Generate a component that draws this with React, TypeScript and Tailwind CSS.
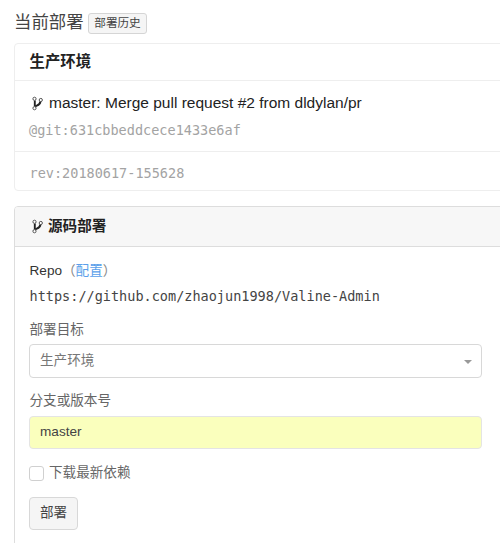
import React from "react";

function BranchIcon() {
  return (
    <svg width="12" height="15" viewBox="0 0 12 15" fill="none" className="shrink-0">
      <path d="M3.8 4.4V10.7" stroke="#222" strokeWidth="1.9" />
      <path d="M3.8 10.7C5.5 9.2 9.2 9.6 9.4 5.4" stroke="#222" strokeWidth="2" />
      <circle cx="3.5" cy="2.8" r="1.6" stroke="#555" strokeWidth="1" fill="#fff" />
      <circle cx="9.8" cy="4" r="1.6" stroke="#555" strokeWidth="1" fill="#fff" />
      <circle cx="3.5" cy="12.2" r="1.6" stroke="#555" strokeWidth="1" fill="#fff" />
    </svg>
  );
}

export default function App() {
  return (
    <div className="h-[543px] w-[500px] overflow-hidden bg-white pl-[14px] pt-3 font-['Liberation_Sans','Noto_Sans_CJK_SC',sans-serif] text-[13.6px] leading-5 text-[#333]">
      <header className="flex h-[31px] items-start">
        <h1 className="w-[74px] whitespace-nowrap text-[17.4px] leading-5 text-[#444]">当前部署</h1>
        <button className="mt-px flex h-[21px] w-[59px] items-center justify-center whitespace-nowrap rounded-[3px] border border-[#d5d5d5] bg-[#f5f5f5] pb-px text-[11.6px] leading-none text-[#444]">
          部署历史
        </button>
      </header>

      <section className="h-[148px] w-[500px] rounded-[4px] border border-[#eee]">
        <h2 className="flex h-[37px] items-center border-b border-[#eee] pb-px pl-[14.5px] text-[15.4px] font-bold text-[#222]">
          生产环境
        </h2>
        <div className="h-[71px] border-b border-[#eee] pl-[14px] pt-3">
          <div className="flex items-center gap-[6px] whitespace-nowrap text-[15.5px] text-[#222]">
            <span className="pl-0.5"><BranchIcon /></span>
            <span>master: Merge pull request #2 from dldylan/pr</span>
          </div>
          <div className="mt-[7px] font-['DejaVu_Sans_Mono',monospace] text-[13.54px] text-[#a3a3a3]">
            @git:631cbbeddcece1433e6af
          </div>
        </div>
        <div className="pl-[14.5px] pt-[11px] font-['DejaVu_Sans_Mono',monospace] text-[13.54px] text-[#a3a3a3]">
          rev:20180617-155628
        </div>
      </section>

      <section className="mt-[15px] h-[350px] w-[500px] rounded-t-[4px] border border-[#ddd]">
        <h2 className="flex h-[40px] items-center gap-[5px] rounded-t-[3px] border-b border-[#ddd] bg-[#f7f7f7] pb-px pl-4 text-[14.6px] font-bold text-[#222]">
          <BranchIcon />
          源码部署
        </h2>
        <div className="w-[467px] pl-[14px] pt-[14px]">
          <div className="flex h-5 items-center whitespace-nowrap pl-[0.5px]">
            <span>Repo</span>
            <span className="text-[#888]">（</span>
            <a className="text-[#5a9fea]">配置</a>
            <span className="text-[#888]">）</span>
          </div>
          <div className="mt-[5px] whitespace-nowrap pl-[0.5px] font-['DejaVu_Sans_Mono',monospace] text-[13.54px] text-[#444]">
            https://github.com/zhaojun1998/Valine-Admin
          </div>
          <label className="mt-[13px] block pl-[0.5px] pt-px text-[#666]">部署目标</label>
          <div className="mt-[4px] flex h-[34px] items-center justify-between rounded-[4px] border border-[#d8d8d8] pl-[10px] pr-[9px] text-[#777]">
            <span>生产环境</span>
            <svg width="8" height="4" viewBox="0 0 8 4" className="mt-0.5"><path d="M0 0H8L4 4Z" fill="#999" /></svg>
          </div>
          <label className="mt-[12px] block pl-[0.5px] pt-px text-[#666]">分支或版本号</label>
          <div className="mt-[5px] flex h-[33px] items-center rounded-[4px] border border-[#e4e4e4] bg-[#faffbd] pl-[10px] pb-0.5 text-[#444]">
            master
          </div>
          <label className="mt-[14px] flex h-5 items-center gap-[5px] text-[#666]">
            <span className="h-[15px] w-[15px] rounded-[3px] border border-[#d0d0d0] bg-white" />
            下载最新依赖
          </label>
          <button className="mt-[14px] flex h-[33px] w-[49px] items-center justify-center rounded-[4px] border border-[#d8d8d8] bg-[#f5f5f5] pb-px text-[#444]">
            部署
          </button>
        </div>
      </section>
    </div>
  );
}
